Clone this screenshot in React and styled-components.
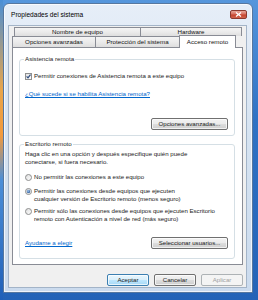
import React from 'react';
import styled, { createGlobalStyle } from 'styled-components';

const GlobalStyle = createGlobalStyle`
  html, body { margin: 0; padding: 0; }
  body {
    width: 258px;
    height: 300px;
    overflow: hidden;
    font-family: "Liberation Sans", Arial, sans-serif;
    color: #1a1a1a;
  }
`;

const Desktop = styled.div`
  width: 258px;
  height: 300px;
  box-sizing: border-box;
  padding: 3px 5px 7px 3px;
  background:
    linear-gradient(180deg, #4a8fd6 0%, #e9a54a 30%, #f39a3c 45%, #4c8fd8 60%, #2060b8 100%) 0 0 / 3px 100% no-repeat,
    linear-gradient(180deg, #5596dc 0%, #2f72c4 40%, #2463b7 100%);
`;

const Window = styled.div`
  width: 250px;
  height: 290px;
  box-sizing: border-box;
  border: 1px solid #56779f;
  border-radius: 6px 6px 0 0;
  background: linear-gradient(180deg, #e6eef8 0%, #d6e3f1 45%, #cbdbee 100%);
  box-shadow: inset 0 0 0 1px rgba(255, 255, 255, 0.7);
  display: flex;
  flex-direction: column;
`;

const TitleBar = styled.div`
  height: 21px;
  flex: none;
  display: flex;
  align-items: center;
  justify-content: space-between;
  padding: 0 5px 0 7px;
`;

const Title = styled.span`
  font-size: 6.6px;
  line-height: 8px;
  color: #000;
`;

const CloseButton = styled.div`
  width: 17px;
  height: 9px;
  box-sizing: border-box;
  border: 1px solid #8b3a30;
  border-radius: 2px;
  background: linear-gradient(180deg, #e9a99c 0%, #d7705f 45%, #c4432d 55%, #d2654e 100%);
  display: flex;
  align-items: center;
  justify-content: center;
`;

const ClientArea = styled.div`
  flex: 1;
  margin: 0 5px 4px 4px;
  box-sizing: border-box;
  border: 1px solid #a3b4c8;
  background: #f0f0f0;
  padding: 1px 3px 1px 3px;
  display: flex;
  flex-direction: column;
`;

const TabRow = styled.div`
  display: flex;
  height: ${(p) => p.$h}px;
  margin-left: ${(p) => p.$indent}px;
  align-items: flex-start;
  flex: none;
`;

const Tab = styled.div`
  width: ${(p) => p.$w}px;
  height: ${(p) => (p.$active ? 13 : p.$h)}px;
  margin-top: ${(p) => (p.$active ? -1 : 0)}px;
  box-sizing: border-box;
  border: 1px solid #898c95;
  border-bottom: ${(p) => (p.$active ? 'none' : '0')};
  background: ${(p) =>
    p.$active ? '#ffffff' : 'linear-gradient(180deg, #f4f4f4 0%, #ebebeb 50%, #dedede 100%)'};
  position: ${(p) => (p.$active ? 'relative' : 'static')};
  z-index: ${(p) => (p.$active ? 1 : 'auto')};
  display: flex;
  align-items: ${(p) => (p.$active ? 'flex-start' : 'center')};
  padding-top: ${(p) => (p.$active ? 2 : 0)}px;
  justify-content: center;
  font-size: 6.2px;
  line-height: 8px;
  color: #111;
  & + & { margin-left: -1px; }
`;

const Panel = styled.div`
  height: 218px;
  flex: none;
  box-sizing: border-box;
  border: 1px solid #898c95;
  background: #fff;
  padding: 7px 7px 4px 6px;
  display: flex;
  flex-direction: column;
`;

const Group = styled.fieldset`
  margin: ${(p) => p.$mt}px 0 0 0;
  border: 1px solid #d5dfe5;
  border-radius: 3px;
  padding: 0 6px ${(p) => p.$pb}px 5px;
  min-width: 0;
`;

const Legend = styled.legend`
  padding: 0 1px;
  margin-left: -1px;
  font-size: 6.2px;
  line-height: 8px;
  color: #1e1e1e;
`;

const Row = styled.div`
  display: flex;
  align-items: flex-start;
  gap: 2px;
  margin-top: ${(p) => p.$mt}px;
  font-size: 6.1px;
  line-height: 8px;
`;

const Text = styled.div`
  margin-top: ${(p) => p.$mt}px;
  font-size: 6.1px;
  line-height: 8px;
`;

const Link = styled.a`
  display: block;
  margin-top: ${(p) => p.$mt || 0}px;
  font-size: 6.1px;
  line-height: 8px;
  color: #0066cc;
  text-decoration: underline;
`;

const Mark = styled.svg`
  flex: none;
  margin-top: 1px;
`;

const BottomRow = styled.div`
  display: flex;
  align-items: center;
  justify-content: ${(p) => p.$justify};
  margin-top: ${(p) => p.$mt}px;
  height: 12px;
`;

const Button = styled.div`
  width: ${(p) => p.$w}px;
  height: 12px;
  box-sizing: border-box;
  border: 1px solid ${(p) => (p.$variant === 'default' ? '#3c7fb1' : p.$variant === 'disabled' ? '#adb2b5' : '#707070')};
  border-radius: 2px;
  background: ${(p) =>
    p.$variant === 'default'
      ? 'linear-gradient(180deg, #eaf6fd 0%, #d9f0fc 50%, #bee6fd 51%, #a7d9f5 100%)'
      : p.$variant === 'disabled'
      ? '#f4f4f4'
      : 'linear-gradient(180deg, #f2f2f2 0%, #ebebeb 50%, #dddddd 51%, #cfcfcf 100%)'};
  box-shadow: ${(p) => (p.$variant === 'disabled' ? 'none' : 'inset 0 0 0 1px rgba(255,255,255,0.7)')};
  color: ${(p) => (p.$variant === 'disabled' ? '#a0a0a0' : '#1a1a1a')};
  font-size: 6.1px;
  line-height: 8px;
  display: flex;
  align-items: center;
  justify-content: center;
  flex: none;
`;

const Footer = styled.div`
  display: flex;
  justify-content: flex-end;
  gap: 5px;
  margin-top: 9px;
  height: 12px;
  flex: none;
`;

const CheckBox = () => (
  <Mark width="7" height="7" viewBox="0 0 7 7">
    <defs>
      <linearGradient id="cbg" x1="0" y1="0" x2="1" y2="1">
        <stop offset="0" stopColor="#e0e0e0" />
        <stop offset="1" stopColor="#ffffff" />
      </linearGradient>
    </defs>
    <rect x="0.5" y="0.5" width="6" height="6" fill="url(#cbg)" stroke="#8e8f8f" />
    <path d="M1.6 3.4 L3 4.9 L5.5 1.6" fill="none" stroke="#2c4a7d" strokeWidth="1.2" />
  </Mark>
);

const Radio = ({ checked }) => (
  <Mark width="7" height="7" viewBox="0 0 7 7">
    <defs>
      <linearGradient id="rbg" x1="0" y1="0" x2="1" y2="1">
        <stop offset="0" stopColor="#dcdcdc" />
        <stop offset="1" stopColor="#ffffff" />
      </linearGradient>
      <radialGradient id="rdot" cx="0.4" cy="0.35" r="0.7">
        <stop offset="0" stopColor="#a5c7ef" />
        <stop offset="1" stopColor="#1d4f91" />
      </radialGradient>
    </defs>
    <circle cx="3.5" cy="3.5" r="3" fill="url(#rbg)" stroke="#8e8f8f" />
    {checked && <circle cx="3.5" cy="3.5" r="1.7" fill="url(#rdot)" />}
  </Mark>
);

export default function App() {
  return (
    <>
      <GlobalStyle />
      <Desktop>
        <Window>
          <TitleBar>
            <Title>Propiedades del sistema</Title>
            <CloseButton>
              <svg width="7" height="5" viewBox="0 0 7 5">
                <path d="M1 0.5 L6 4.5 M6 0.5 L1 4.5" stroke="#fff" strokeWidth="1.3" />
              </svg>
            </CloseButton>
          </TitleBar>
          <ClientArea>
            <TabRow $h={9} $indent={2}>
              <Tab $w={127} $h={9}>Nombre de equipo</Tab>
              <Tab $w={102} $h={9}>Hardware</Tab>
            </TabRow>
            <TabRow $h={11} $indent={0}>
              <Tab $w={84} $h={11}>Opciones avanzadas</Tab>
              <Tab $w={85} $h={11}>Protección del sistema</Tab>
              <Tab $w={57} $h={11} $active>Acceso remoto</Tab>
            </TabRow>
            <Panel>
              <Group $mt={0} $pb={5}>
                <Legend>Asistencia remota</Legend>
                <Row $mt={9}>
                  <CheckBox />
                  <span>Permitir conexiones de Asistencia remota a este equipo</span>
                </Row>
                <Link $mt={10}>¿Qué sucede si se habilita Asistencia remota?</Link>
                <BottomRow $mt={20} $justify="flex-end">
                  <Button $w={77}>Opciones avanzadas...</Button>
                </BottomRow>
              </Group>
              <Group $mt={4} $pb={9}>
                <Legend>Escritorio remoto</Legend>
                <Text $mt={2}>
                  Haga clic en una opción y después especifique quién puede
                  <br />
                  conectarse, si fuera necesario.
                </Text>
                <Row $mt={7}>
                  <Radio />
                  <span>No permitir las conexiones a este equipo</span>
                </Row>
                <Row $mt={6}>
                  <Radio checked />
                  <span>
                    Permitir las conexiones desde equipos que ejecuten
                    <br />
                    cualquier versión de Escritorio remoto (menos seguro)
                  </span>
                </Row>
                <Row $mt={4}>
                  <Radio />
                  <span>
                    Permitir sólo las conexiones desde equipos que ejecuten Escritorio
                    <br />
                    remoto con Autenticación a nivel de red (más seguro)
                  </span>
                </Row>
                <BottomRow $mt={14} $justify="space-between">
                  <Link>Ayudame a elegir</Link>
                  <Button $w={77}>Seleccionar usuarios...</Button>
                </BottomRow>
              </Group>
            </Panel>
            <Footer>
              <Button $w={42} $variant="default">Aceptar</Button>
              <Button $w={42}>Cancelar</Button>
              <Button $w={42} $variant="disabled">Aplicar</Button>
            </Footer>
          </ClientArea>
        </Window>
      </Desktop>
    </>
  );
}
